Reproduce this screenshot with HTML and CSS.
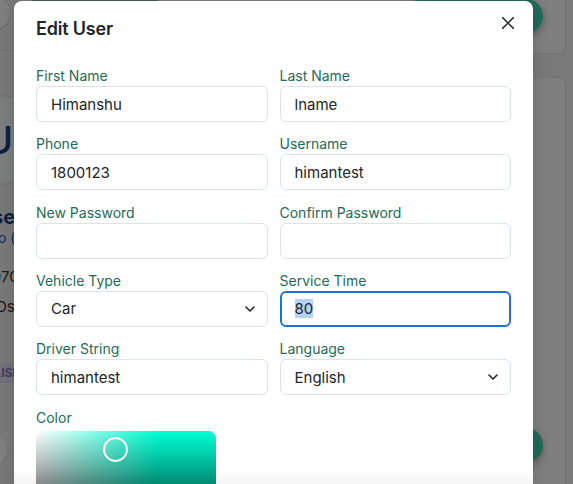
FILE: index.html
```html
<!DOCTYPE html>
<html lang="en">
<head>
<meta charset="utf-8">
<title>Edit User</title>
<link rel="stylesheet" href="styles.css">
</head>
<body>
<div class="page">
  <aside class="side">
    <div class="mini-row">
      <span class="mini-avatar"></span>
    </div>
    <div class="avatar">U</div>
    <div class="p-line p-name">se</div>
    <div class="p-line p-role">o (</div>
    <div class="p-line p-phone">970</div>
    <div class="p-line p-ids">IDs</div>
    <div class="p-line"><span class="badge">ENGLISH</span></div>
    <span class="round-btn"></span>
  </aside>
  <section class="cards">
    <div class="card card-top">
      <span class="top-btn"></span>
      <span class="pill"></span>
    </div>
    <div class="card card-main"><span class="fab"></span></div>
  </section>
</div>

<div class="overlay"></div>

<div class="modal" role="dialog" aria-labelledby="modal-title">
  <div class="modal-header">
    <h2 class="modal-title" id="modal-title">Edit User</h2>
    <svg class="close" width="12" height="12" viewBox="0 0 12 12" aria-label="Close">
      <path d="M0.6 0.6 L11.4 11.4 M11.4 0.6 L0.6 11.4" stroke="#2b2f33" stroke-width="1.5" stroke-linecap="round"/>
    </svg>
  </div>
  <div class="modal-body">
    <div class="field">
      <label class="label">First Name</label>
      <div class="input">Himanshu</div>
    </div>
    <div class="field">
      <label class="label">Last Name</label>
      <div class="input">lname</div>
    </div>
    <div class="field">
      <label class="label">Phone</label>
      <div class="input">1800123</div>
    </div>
    <div class="field">
      <label class="label">Username</label>
      <div class="input">himantest</div>
    </div>
    <div class="field">
      <label class="label">New Password</label>
      <div class="input"></div>
    </div>
    <div class="field">
      <label class="label">Confirm Password</label>
      <div class="input"></div>
    </div>
    <div class="field">
      <label class="label">Vehicle Type</label>
      <div class="input select">
        <span>Car</span>
        <svg class="chev" width="10" height="6" viewBox="0 0 10 6"><path d="M1 1 L5 5 L9 1" fill="none" stroke="#212529" stroke-width="1.6" stroke-linecap="round" stroke-linejoin="round"/></svg>
      </div>
    </div>
    <div class="field">
      <label class="label">Service Time</label>
      <div class="input focused"><span class="sel">80</span></div>
    </div>
    <div class="field">
      <label class="label">Driver String</label>
      <div class="input">himantest</div>
    </div>
    <div class="field">
      <label class="label">Language</label>
      <div class="input select">
        <span>English</span>
        <svg class="chev" width="10" height="6" viewBox="0 0 10 6"><path d="M1 1 L5 5 L9 1" fill="none" stroke="#212529" stroke-width="1.6" stroke-linecap="round" stroke-linejoin="round"/></svg>
      </div>
    </div>
    <div class="field field-color">
      <label class="label">Color</label>
      <div class="picker">
        <span class="picker-dot"></span>
      </div>
    </div>
  </div>
</div>
<div class="fade"></div>
</body>
</html>
```
FILE: styles.css
```css
* { box-sizing: border-box; margin: 0; padding: 0; }

html, body {
  width: 573px;
  height: 484px;
  overflow: hidden;
}

body {
  position: relative;
  font-family: Inter, "Noto Sans", sans-serif;
  background: #f2f3f5;
  color: #212529;
}

/* ---------- background page ---------- */
.page {
  display: flex;
  height: 484px;
}

.side {
  width: 60px;
  margin-left: -46px;
  flex: none;
  display: flex;
  flex-direction: column;
  overflow: hidden;
}

.mini-row {
  display: flex;
  align-items: flex-start;
  height: 51px;
  border-bottom: 1px solid #e2e2e2;
}

.mini-avatar {
  width: 32px;
  height: 32px;
  margin: -3px 0 0 24px;
  border-radius: 50%;
  background: #ffffff;
  box-shadow: 0 1px 3px rgba(0,0,0,.15);
}

.avatar {
  width: 90px;
  height: 90px;
  flex: none;
  margin-top: 44px;
  border-radius: 50%;
  border: 1px solid #dcdfe4;
  background: #f9fafb;
  display: flex;
  align-items: center;
  justify-content: center;
  font-size: 38px;
  font-weight: 500;
  color: #1c3f86;
}

.p-line {
  padding-left: 38px;
  white-space: nowrap;
}

.p-name {
  margin-top: 20px;
  font-size: 20px;
  font-weight: 700;
  line-height: 24px;
  color: #1c3f86;
}

.p-role {
  padding-left: 44px;
  font-size: 14px;
  line-height: 18px;
  color: #2a55a8;
}

.p-phone {
  margin-top: 20px;
  font-size: 15px;
  line-height: 20px;
  color: #333;
}

.p-ids {
  margin-top: 10px;
  font-size: 15px;
  line-height: 20px;
  color: #333;
}

.badge {
  display: inline-block;
  margin-top: 46px;
  margin-left: -31px;
  padding: 3px 8px;
  border-radius: 4px;
  background: #e4e1f4;
  color: #7b6fc4;
  font-size: 12px;
  font-weight: 600;
  line-height: 14px;
}

.round-btn {
  width: 34px;
  height: 34px;
  flex: none;
  margin: 50px 0 0 19px;
  border-radius: 50%;
  background: #ffffff;
  box-shadow: 0 1px 3px rgba(0,0,0,.15);
}

.cards {
  flex: 1;
  display: flex;
  flex-direction: column;
  padding-right: 7px;
  padding-left: 10px;
}

.card {
  flex: none;
  background: #ffffff;
  border: 1px solid #e3e4e6;
  border-radius: 8px;
  display: flex;
  justify-content: space-between;
}

.card-top {
  height: 65px;
  margin-top: -11px;
  align-items: flex-start;
}

.top-btn {
  width: 130px;
  height: 32px;
  margin: -20px 0 0 5px;
  border-radius: 6px;
  background: #7fb3a6;
}

.pill {
  width: 138px;
  height: 34px;
  margin: 9px 22px 0 0;
  border-radius: 17px;
  background: #3dd6b5;
  box-shadow: 0 3px 8px rgba(0,0,0,.3);
}

.card-main {
  height: 500px;
  margin-top: 23px;
  align-items: flex-start;
  justify-content: flex-end;
}

.fab {
  width: 34px;
  height: 34px;
  margin: 350px 22px 0 0;
  border-radius: 50%;
  background: #3dd6b5;
  box-shadow: 0 3px 8px rgba(0,0,0,.3);
}

.overlay {
  position: absolute;
  inset: 0;
  background: rgba(0, 0, 0, 0.5);
}

/* ---------- modal ---------- */
.modal {
  position: absolute;
  left: 14px;
  top: 1px;
  width: 519px;
  height: 600px;
  background: #ffffff;
  border-radius: 8px;
  box-shadow: 0 4px 16px rgba(0,0,0,.15);
}

.modal-header {
  display: flex;
  justify-content: space-between;
  align-items: flex-start;
  padding: 15px 19px 0 22px;
}

.modal-title {
  font-size: 18px;
  font-weight: 600;
  line-height: 26px;
  letter-spacing: -0.2px;
  color: #212529;
}

.close {
  margin-top: 1px;
}

.modal-body {
  display: grid;
  grid-template-columns: 1fr 1fr;
  column-gap: 12px;
  row-gap: 9.25px;
  padding: 21px 22px 0;
}

.label {
  display: block;
  font-size: 14px;
  line-height: 21px;
  padding-top: 2px;
  margin-bottom: 0;
  color: #1e6b58;
}

.input {
  height: 36px;
  display: flex;
  align-items: center;
  padding: 0 14px;
  border: 1px solid #dbe2ea;
  border-radius: 6px;
  font-size: 15px;
  color: #212529;
  background: #fff;
}

.select {
  justify-content: space-between;
  padding-right: 12px;
}

.chev {
  flex: none;
}

.focused {
  border: 2px solid #2170cc;
  padding: 0 13px;
}

.sel {
  background: #b3d4fa;
}

.field-color .label {
  padding-top: 3px;
  margin-bottom: 3px;
}

.picker {
  position: relative;
  width: 180px;
  height: 120px;
  border-radius: 8px 8px 0 0;
  background:
    linear-gradient(to top, #000 0%, rgba(0,0,0,0) 100%),
    linear-gradient(to right, #ffffff 0%, #00ffd4 67%, #00ffd4 100%);
}

.picker-dot {
  position: absolute;
  left: 67px;
  top: 6px;
  width: 25px;
  height: 25px;
  border-radius: 50%;
  border: 2px solid #ffffff;
  box-shadow: 0 0 1px rgba(0,0,0,.3);
}

.fade {
  position: absolute;
  left: 14px;
  bottom: 0;
  width: 519px;
  height: 16px;
  background: linear-gradient(to bottom, rgba(0,0,0,0), rgba(0,0,0,0.045));
}
```
